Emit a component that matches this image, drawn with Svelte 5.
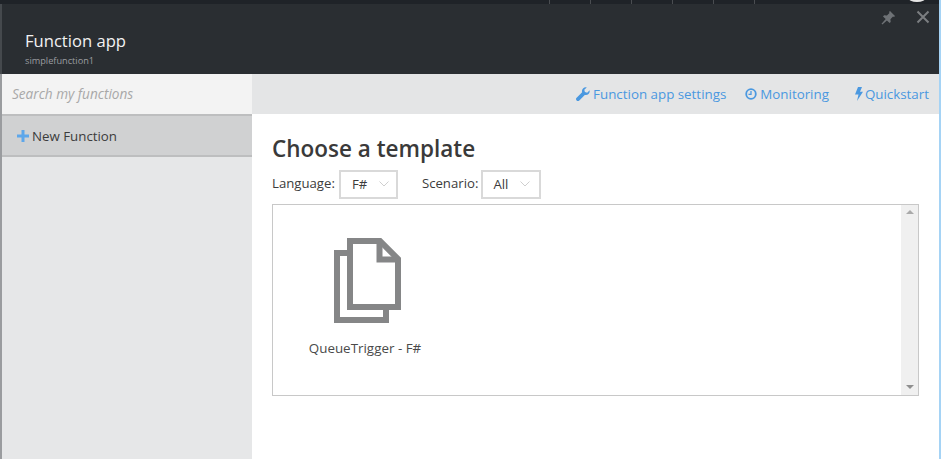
<script>
  const ticks = [0, 1, 2, 3, 4, 5];
</script>

<div class="page">
  <div class="topbar">
    <div class="ticks">
      {#each ticks as t (t)}
        <span class="tick"></span>
      {/each}
    </div>
    <span class="avatar"></span>
  </div>

  <div class="blade">
    <header class="header">
      <div class="titles">
        <div class="title">Function app</div>
        <div class="subtitle">simplefunction1</div>
      </div>
      <div class="actions">
        <svg width="16" height="16" viewBox="0 0 16 16"><path d="M10 1l5 5-1 1-1-.4-2.600 2.600.3 2.800-1.100 1.100-2.700-2.700L2.400 14.600 1.500 13.700l4.200-4.600L3 6.400l1.100-1.100 2.800.3L9.500 3 9 2z" fill="#6e7276"/></svg>
        <svg width="14" height="14" viewBox="0 0 14 14"><path d="M1.500 1.500l11 11M12.500 1.500l-11 11" stroke="#7b7e81" stroke-width="2" fill="none"/></svg>
      </div>
    </header>

    <div class="main">
      <aside class="sidebar">
        <div class="search">Search my functions</div>
        <div class="newfn">
          <svg width="12" height="12" viewBox="0 0 12 12"><path d="M4.500 0h3v4.500H12v3H7.500V12h-3V7.500H0v-3h4.500z" fill="#5ea7ea"/></svg>
          <span>New Function</span>
        </div>
      </aside>

      <section class="content">
        <nav class="toolbar">
          <a class="link">
            <svg width="14" height="14" viewBox="0 0 14 14"><path d="M13.600 3.300c.3 1.400-.1 2.800-1.100 3.700-1 1-2.400 1.300-3.700.9L3.300 13.400c-.8.800-2 .8-2.700 0-.8-.8-.8-2 0-2.700l5.500-5.500C5.700 3.900 6 2.500 7 1.500 8 .5 9.400.1 10.700.4L8.300 2.800l.6 2.300 2.300.6z" fill="#4a98e0"/></svg>
            Function app settings
          </a>
          <a class="link">
            <svg width="12" height="12" viewBox="0 0 12 12"><circle cx="6" cy="6" r="4.800" fill="none" stroke="#4a98e0" stroke-width="1.800"/><path d="M6 3v3.300H3.500" fill="none" stroke="#4a98e0" stroke-width="1.300"/></svg>
            Monitoring
          </a>
          <a class="link quick">
            <svg width="8" height="14" viewBox="0 0 8 14"><path d="M3 0h4L5 4.800h3L2 14l1.500-6.500H0z" fill="#4a98e0"/></svg>
            Quickstart
          </a>
        </nav>

        <div class="body">
          <h1>Choose a template</h1>
          <div class="filters">
            <span class="label">Language:</span>
            <div class="select lang">
              <span>F#</span>
              <svg width="10" height="6" viewBox="0 0 10 6"><path d="M.5.500L5 5 9.500.500" fill="none" stroke="#cfcfcf"/></svg>
            </div>
            <span class="label scenario">Scenario:</span>
            <div class="select scen">
              <span>All</span>
              <svg width="10" height="6" viewBox="0 0 10 6"><path d="M.5.500L5 5 9.500.500" fill="none" stroke="#cfcfcf"/></svg>
            </div>
          </div>

          <div class="templates">
            <div class="list">
              <div class="card">
                <svg class="fileicon" width="67" height="85" viewBox="0 0 67 85">
                  <path d="M16 15H3v67h49V70" fill="none" stroke="#858687" stroke-width="6"/>
                  <path d="M16 3h30l18 18v48H16z" fill="#fff" stroke="#858687" stroke-width="6"/>
                  <path d="M45.500 3v18.500H64" fill="none" stroke="#858687" stroke-width="6"/>
                </svg>
                <div class="cardname">QueueTrigger - F#</div>
              </div>
            </div>
            <div class="scroll">
              <span class="up"></span>
              <span class="down"></span>
            </div>
          </div>
        </div>
      </section>
    </div>
  </div>
</div>

<style>
  :global(body) {
    margin: 0;
    background: #fff;
    overflow: hidden;
  }

  .page {
    width: 941px;
    height: 459px;
    display: flex;
    flex-direction: column;
    font-family: "Open Sans", "Noto Sans", sans-serif;
    color: #3c3c3c;
    overflow: hidden;
  }

  .topbar {
    height: 4px;
    flex: none;
    background: #1f2328;
    display: flex;
    padding-left: 549px;
    position: relative;
    border-right: 2px solid #a5d3f5;
  }
  .ticks {
    display: flex;
    gap: 40px;
  }
  .tick {
    width: 1px;
    background: #4a4d51;
  }
  .avatar {
    position: absolute;
    left: 908px;
    top: -7px;
    width: 18px;
    height: 9px;
    border-radius: 50%;
    background: #e6e6e6;
  }

  .blade {
    flex: 1;
    display: flex;
    flex-direction: column;
    border-left: 2px solid #9a9c9f;
    border-right: 2px solid #a5d3f5;
    min-height: 0;
  }

  .header {
    height: 70px;
    flex: none;
    background: #2a2e32;
    display: flex;
    justify-content: space-between;
    padding: 0 9px 0 23px;
    box-shadow: -2px 0 0 #45494d;
  }
  .title {
    margin-top: 26px;
    font-size: 16.600px;
    line-height: 22px;
    color: #f2f2f2;
  }
  .subtitle {
    margin-top: 2px;
    font-size: 9.200px;
    line-height: 13px;
    color: #9a9da0;
  }
  .actions {
    display: flex;
    gap: 20px;
    align-items: flex-start;
    padding-top: 6px;
  }

  .main {
    flex: 1;
    display: flex;
    min-height: 0;
  }

  .sidebar {
    width: 250px;
    flex: none;
    background: #e6e7e8;
  }
  .search {
    height: 40px;
    background: #f3f3f3;
    padding-left: 10px;
    font-size: 13.600px;
    font-style: italic;
    line-height: 40px;
    color: #a8a8a8;
    box-sizing: border-box;
  }
  .newfn {
    height: 43px;
    box-sizing: border-box;
    background: #d0d1d2;
    border-top: 2px solid #bdbebf;
    border-bottom: 2px solid #bdbebf;
    display: flex;
    align-items: center;
    gap: 3px;
    padding-left: 15px;
    font-size: 13.300px;
  }

  .content {
    flex: 1;
    display: flex;
    flex-direction: column;
    min-width: 0;
  }
  .toolbar {
    height: 40px;
    flex: none;
    background: #e4e5e6;
    display: flex;
    justify-content: flex-end;
    align-items: center;
    gap: 19px;
    padding-right: 10px;
  }
  .link {
    display: flex;
    align-items: center;
    gap: 3px;
    font-size: 13.350px;
    color: #4a98e0;
  }
  .quick {
    margin-left: 7px;
    gap: 2px;
  }

  .body {
    flex: 1;
    padding: 0 20px;
  }
  h1 {
    margin: 20px 0 0;
    font-size: 22.500px;
    line-height: 30px;
    font-weight: 600;
    color: #3a3a3a;
  }
  .filters {
    display: flex;
    align-items: center;
    height: 30px;
    margin-top: 5px;
    font-size: 13.200px;
  }
  .label {
    margin-right: 4px;
    margin-top: -3px;
  }
  .scenario {
    margin-left: 24px;
    margin-right: 3px;
  }
  .select {
    height: 29px;
    box-sizing: border-box;
    border: 2px solid #d9d9d9;
    display: flex;
    align-items: center;
    padding-left: 11px;
    gap: 12px;
  }
  .lang {
    width: 59px;
  }
  .scen {
    width: 60px;
    padding-left: 10px;
  }

  .templates {
    margin-top: 5px;
    width: 647px;
    height: 192px;
    box-sizing: border-box;
    border: 1px solid #c8c8c8;
    display: flex;
  }
  .list {
    flex: 1;
    padding: 33px 0 0 35px;
  }
  .card {
    width: 114px;
    display: flex;
    flex-direction: column;
    align-items: center;
    gap: 16px;
  }
  .fileicon {
    margin-left: 4px;
  }
  .cardname {
    font-size: 13.400px;
    white-space: nowrap;
    color: #4a4a4a;
  }
  .scroll {
    width: 17px;
    background: #f0f0f0;
    position: relative;
  }
  .up,
  .down {
    position: absolute;
    left: 5px;
    width: 0;
    height: 0;
    border-left: 4px solid transparent;
    border-right: 4px solid transparent;
  }
  .up {
    top: 5px;
    border-bottom: 4px solid #aaa;
  }
  .down {
    bottom: 6px;
    border-top: 4px solid #8f8f8f;
  }
</style>
